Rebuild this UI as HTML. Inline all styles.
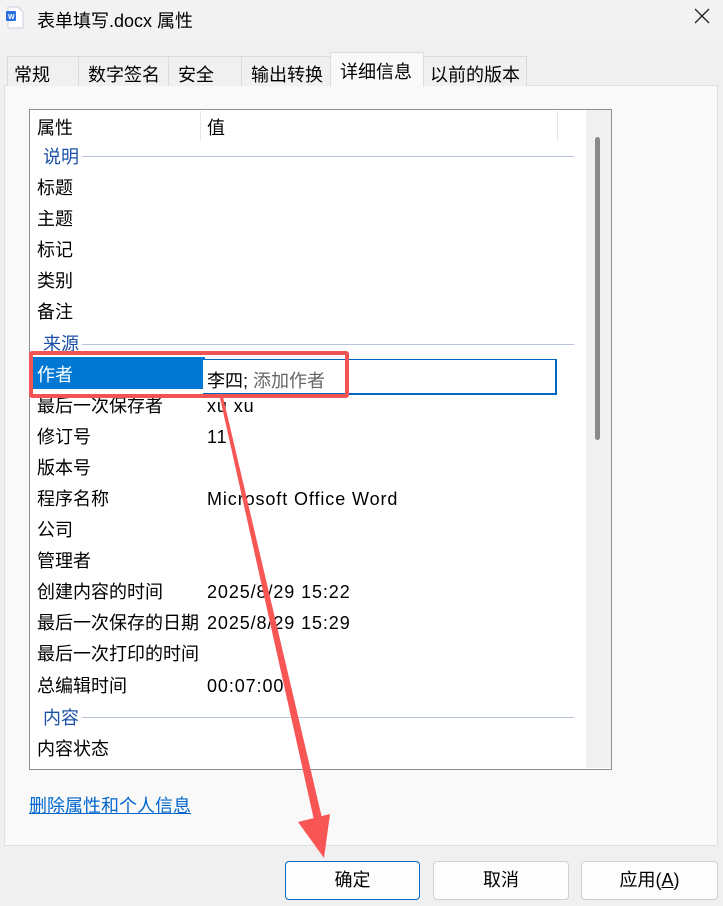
<!DOCTYPE html>
<html><head><meta charset="utf-8"><style>
*{margin:0;padding:0;box-sizing:border-box}
body{width:723px;height:906px;background:#f0f0f0;font-family:"Liberation Sans","Noto Sans CJK SC",sans-serif;font-size:18px;color:#000;position:relative;overflow:hidden}
.a{position:absolute;white-space:nowrap}
.tab{position:absolute;top:56px;height:30px;border:1px solid #dcdcdc;border-bottom:none;background:#f0f0f0;padding:4px 0 0 6px;font-size:18px}
.r{position:absolute;left:37px;line-height:20px}
.v{position:absolute;left:207px;line-height:20px;letter-spacing:0.9px}
.g{position:absolute;left:43px;color:#1a4fa8;line-height:20px}
.gl{position:absolute;height:1px;background:#b8c4d8}
.btn{position:absolute;top:861px;height:39px;border:1px solid #d0d0d0;border-radius:4px;background:#fdfdfd;text-align:center;line-height:37px}
</style></head><body>
<div class="a" style="left:0;top:0;width:723px;height:40px;background:#f3f3f3"></div>
<svg class="a" style="left:5px;top:6px" width="20" height="24" viewBox="0 0 20 24"><path d="M3 1h10l5 5v16H3z" fill="#fff" stroke="#c8d0dc"/><rect x="1" y="5" width="10" height="10" rx="1" fill="#2b6fe0"/><text x="3" y="13" font-size="7" fill="#fff" font-family="Liberation Sans" font-weight="bold">W</text></svg>
<div class="a" style="left:37px;top:7px;font-size:18px">表单填写.docx 属性</div>
<svg class="a" style="left:694px;top:8px" width="16" height="16"><path d="M1 1L15 15M15 1L1 15" stroke="#222" stroke-width="1.3"/></svg>
<div class="a" style="left:4px;top:85px;width:714px;height:761px;background:#f9f9f9;border:1px solid #e0e0e0"></div>
<div class="tab" style="left:7px;width:72px">常规</div>
<div class="tab" style="left:78px;width:91px;padding-left:9px">数字签名</div>
<div class="tab" style="left:168px;width:74px;padding-left:9px">安全</div>
<div class="tab" style="left:241px;width:90px;padding-left:9px">输出转换</div>
<div class="tab" style="left:330px;top:52px;height:35px;width:94px;background:#f9f9f9;padding-top:5px;padding-left:9px">详细信息</div>
<div class="tab" style="left:423px;width:104px;padding-left:6px">以前的版本</div>
<div class="a" style="left:29px;top:109px;width:583px;height:661px;background:#fff;border:1px solid #8a8f99"></div>
<div class="a" style="left:586px;top:110px;width:25px;height:658px;background:#f0f0f0"></div>
<div class="a" style="left:595px;top:137px;width:5px;height:303px;background:#8a8a8a;border-radius:3px"></div>
<div class="a" style="left:200px;top:111px;width:1px;height:30px;background:#e5e5e5"></div>
<div class="a" style="left:557px;top:111px;width:1px;height:30px;background:#e5e5e5"></div>
<div class="r" style="top:118px">属性</div><div class="v" style="top:118px">值</div>
<div class="g" style="top:147px">说明</div><div class="gl" style="left:82px;top:156px;width:492px"></div>
<div class="r" style="top:178px">标题</div>
<div class="r" style="top:209px">主题</div>
<div class="r" style="top:240px">标记</div>
<div class="r" style="top:271px">类别</div>
<div class="r" style="top:302px">备注</div>
<div class="g" style="top:334px">来源</div><div class="gl" style="left:82px;top:344px;width:492px"></div>
<div class="a" style="left:33px;top:357px;width:172px;height:32px;background:#0078d4"></div>
<div class="r" style="top:365px;color:#fff">作者</div>
<div class="a" style="left:203px;top:359px;width:354px;height:36px;background:#fff;border-right:2px solid #0067c0;border-bottom:2px solid #0067c0;border-top:1px solid #0067c0"></div>
<div class="a" style="left:207px;top:371px;line-height:20px">李四; <span style="color:#666">添加作者</span></div>
<div class="r" style="top:396px">最后一次保存者</div><div class="v" style="top:396px">xu xu</div>
<div class="r" style="top:427px">修订号</div><div class="v" style="top:427px">11</div>
<div class="r" style="top:458px">版本号</div>
<div class="r" style="top:489px">程序名称</div><div class="v" style="top:489px">Microsoft Office Word</div>
<div class="r" style="top:520px">公司</div>
<div class="r" style="top:551px">管理者</div>
<div class="r" style="top:582px">创建内容的时间</div><div class="v" style="top:582px">2025/8/29 15:22</div>
<div class="r" style="top:613px">最后一次保存的日期</div><div class="v" style="top:613px">2025/8/29 15:29</div>
<div class="r" style="top:644px">最后一次打印的时间</div>
<div class="r" style="top:676px">总编辑时间</div><div class="v" style="top:676px">00:07:00</div>
<div class="g" style="top:708px">内容</div><div class="gl" style="left:82px;top:717px;width:492px"></div>
<div class="r" style="top:739px">内容状态</div>
<div class="a" style="left:29px;top:792px;color:#0066cc;text-decoration:underline">删除属性和个人信息</div>
<div class="btn" style="left:285px;width:135px;border-color:#0067c0">确定</div>
<div class="btn" style="left:433px;width:136px">取消</div>
<div class="btn" style="left:581px;width:137px">应用(<u>A</u>)</div>
<div class="a" style="left:29px;top:351px;width:320px;height:47px;border:4px solid #f25454;border-radius:3px"></div>
<svg class="a" style="left:0;top:0" width="723" height="906"><polygon points="220,398 223,397 322,818 314,820" fill="#f85555"/><polygon points="298,822 330,814 324,858" fill="#f85555"/></svg>
</body></html>
